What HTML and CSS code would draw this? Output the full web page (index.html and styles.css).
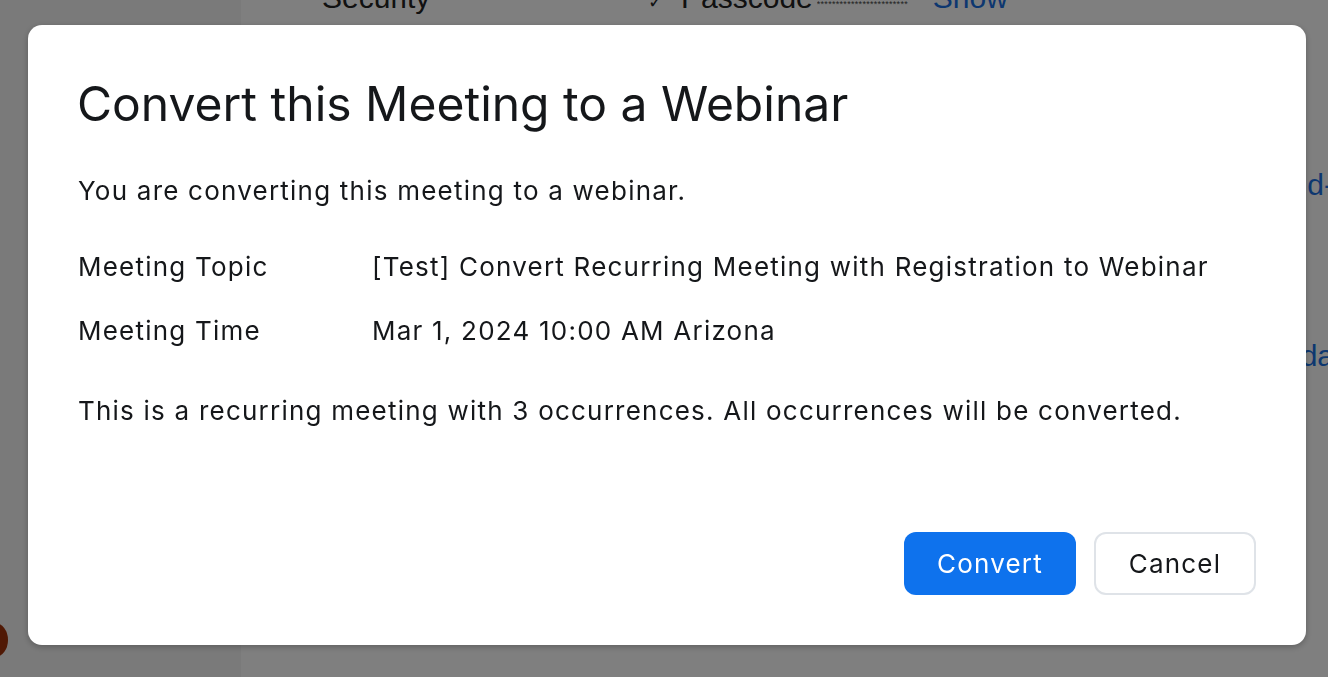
FILE: index.html
```html
<!DOCTYPE html>
<html>
<head>
<meta charset="utf-8">
<link rel="stylesheet" href="styles.css">
</head>
<body>
<div class="app">
  <aside class="sidebar">
    <div class="avatar"></div>
  </aside>
  <main class="main">
    <div class="row row-security">
      <span class="label">Security</span>
      <span class="check">&#10003;</span>
      <span class="pass">Passcode</span>
      <span class="dots">************************</span>
      <a class="link">Show</a>
    </div>
    <div class="edge edge-1">d-</div>
    <div class="edge edge-2">da</div>
  </main>
</div>
<div class="overlay">
  <div class="dialog">
    <h1 class="title">Convert this Meeting to a Webinar</h1>
    <p class="intro">You are converting this meeting to a webinar.</p>
    <div class="info">
      <div class="info-label">Meeting Topic</div>
      <div class="info-value">[Test] Convert Recurring Meeting with Registration to Webinar</div>
      <div class="info-label">Meeting Time</div>
      <div class="info-value">Mar 1, 2024 10:00 AM Arizona</div>
    </div>
    <p class="note">This is a recurring meeting with 3 occurrences. All occurrences will be converted.</p>
    <div class="actions">
      <button class="btn btn-primary">Convert</button>
      <button class="btn btn-secondary">Cancel</button>
    </div>
  </div>
</div>
</body>
</html>
```

FILE: styles.css
```css
html, body {
  margin: 0;
  padding: 0;
  height: 100%;
  overflow: hidden;
  font-family: Inter, "Liberation Sans", sans-serif;
}

.app {
  display: flex;
  height: 677px;
  background: #ffffff;
}

.sidebar {
  width: 241px;
  background: #f5f5f5;
  display: flex;
  flex-direction: column;
  justify-content: flex-end;
  padding-bottom: 20px;
  box-sizing: border-box;
}

.avatar {
  width: 26px;
  height: 34px;
  border-radius: 50%;
  background: #a0330a;
  margin-left: -18px;
}

.main {
  flex: 1;
  display: flex;
  flex-direction: column;
  font-family: "Liberation Sans", Arial, sans-serif;
  color: #232323;
}

.row-security {
  display: flex;
  align-items: baseline;
  margin-top: -19px;
  font-size: 30px;
  padding-left: 81px;
}

.row-security .label { width: 326px; }
.row-security .check { font-size: 18px; margin-right: 18px; }
.row-security .pass { margin-right: 4px; }
.row-security .dots {
  font-size: 9px;
  letter-spacing: 0.3px;
  width: 96px;
  overflow: hidden;
  white-space: nowrap;
  margin-right: 20px;
  align-self: flex-start;
  margin-top: 18px;
  color: #444;
}
.row-security .link { color: #1a6fe0; }

.edge {
  align-self: flex-end;
  font-size: 30px;
  color: #1a6fe0;
  margin-right: -6px;
}
.edge-1 { margin-top: 153px; }
.edge-2 { margin-top: 137px; }

.overlay {
  position: fixed;
  inset: 0;
  background: rgba(0, 0, 0, 0.5);
  padding: 25px 22px 32px 28px;
  box-sizing: border-box;
}

.dialog {
  background: #ffffff;
  border-radius: 14px;
  height: 620px;
  box-sizing: border-box;
  padding: 55px 50px 0 50px;
  color: #15171a;
  display: flex;
  flex-direction: column;
  box-shadow: 0 2px 6px rgba(0,0,0,0.25);
}

.title {
  margin: 0 0 0 -1px;
  font-size: 48px;
  font-weight: 400;
  line-height: 1;
  letter-spacing: 0;
}

.intro,
.info,
.note {
  font-size: 26px;
  letter-spacing: 1.22px;
}

.intro {
  margin: 50px 0 0 0;
  line-height: 1;
}

.info {
  display: grid;
  grid-template-columns: 294px auto;
  row-gap: 34px;
  margin-top: 48px;
  line-height: 30px;
}

.note {
  margin: 52px 0 0 0;
  line-height: 1;
}

.actions {
  margin-top: auto;
  margin-bottom: 50px;
  display: flex;
  justify-content: flex-end;
  gap: 18px;
}

.btn {
  font-family: Inter, "Liberation Sans", sans-serif;
  font-size: 26px;
  letter-spacing: 1.2px;
  height: 63px;
  border-radius: 12px;
  padding: 0;
  cursor: pointer;
}

.btn-primary {
  background: #0e72ed;
  color: #ffffff;
  border: none;
  width: 172px;
}

.btn-secondary {
  background: #ffffff;
  color: #15171a;
  border: 2px solid #dfe3e8;
  width: 162px;
}
```
